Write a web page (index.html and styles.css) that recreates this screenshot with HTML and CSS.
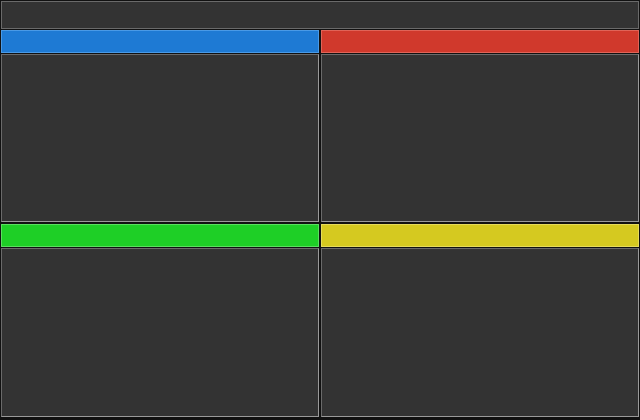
FILE: index.html
```html
<!DOCTYPE html>
<html>
<head>
<meta charset="utf-8">
<link rel="stylesheet" href="styles.css">
</head>
<body>
<div class="app">
  <div class="topbar"></div>
  <div class="grid">
    <div class="panel">
      <div class="header blue"></div>
      <div class="body"></div>
    </div>
    <div class="panel">
      <div class="header red"></div>
      <div class="body"></div>
    </div>
    <div class="panel">
      <div class="header green"></div>
      <div class="body"></div>
    </div>
    <div class="panel">
      <div class="header yellow"></div>
      <div class="body"></div>
    </div>
  </div>
</div>
</body>
</html>
```
FILE: styles.css
```css
html, body {
  margin: 0;
  padding: 0;
  background: #111111;
  font-family: "Liberation Sans", Arial, sans-serif;
}
.app {
  width: 640px;
  height: 420px;
  display: flex;
  flex-direction: column;
  gap: 1px;
  padding: 1px 1px 3px 1px;
  box-sizing: border-box;
}
.topbar {
  height: 28px;
  box-sizing: border-box;
  background: #333333;
  border: 1px solid #6a6a6a;
  flex: none;
}
.grid {
  flex: 1;
  display: grid;
  grid-template-columns: 1fr 1fr;
  grid-template-rows: 192px 193px;
  column-gap: 2px;
  row-gap: 2px;
}
.panel {
  display: flex;
  flex-direction: column;
  gap: 1px;
  min-height: 0;
}
.header {
  height: 23px;
  box-sizing: border-box;
  flex: none;
  border: 1px solid;
}
.blue { background: #1e7ad4; border-color: #4a9ae6; }
.red { background: #d0392c; border-color: #e06458; }
.green { background: #1ecf26; border-color: #5ae060; }
.yellow { background: #d5c920; border-color: #e6dc5a; }
.body {
  flex: 1;
  background: #333333;
  border: 1px solid #6a6a6a;
  border-right-color: #9a9a9a;
  border-bottom-color: #9a9a9a;
}
```
